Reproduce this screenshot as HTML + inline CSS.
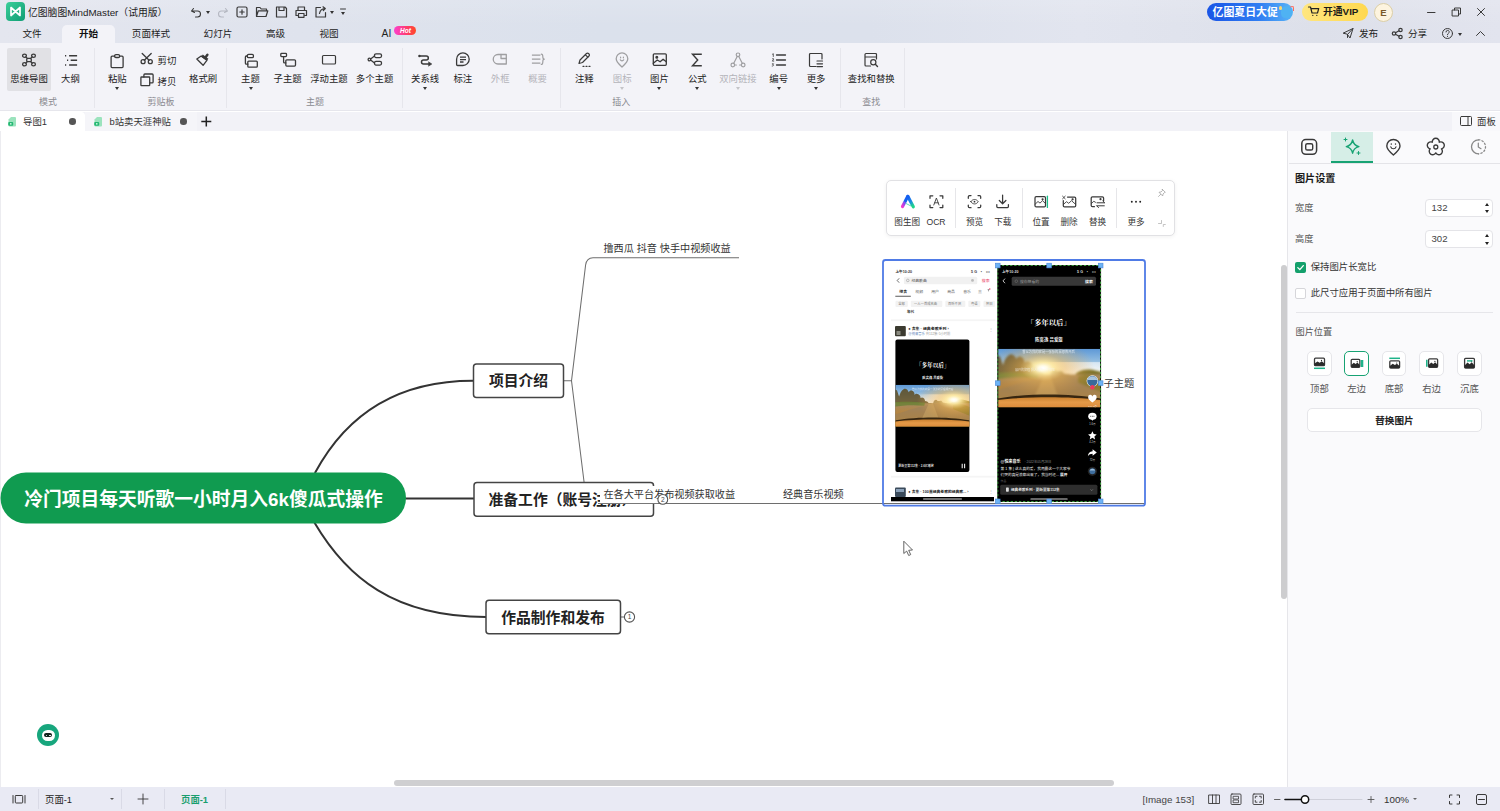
<!DOCTYPE html>
<html lang="zh-CN">
<head>
<meta charset="utf-8">
<title>亿图脑图MindMaster</title>
<style>
*{box-sizing:border-box;margin:0;padding:0}
html,body{width:1500px;height:811px;overflow:hidden;background:#fff}
body{font-family:"Liberation Sans","Noto Sans CJK SC",sans-serif;font-size:9.4px;color:#222;position:relative}
.abs{position:absolute}
svg{position:absolute;overflow:visible}
.ic{fill:none;stroke:#3a3a3a;stroke-width:1.2;stroke-linecap:round;stroke-linejoin:round}
.dis{opacity:.45}
/* header */
#hdr{position:absolute;left:0;top:0;width:1500px;height:43px;background:linear-gradient(180deg,rgba(255,255,255,.12),rgba(255,255,255,0) 60%),linear-gradient(90deg,#e4e6ef 0%,#dfe3ed 20%,#dbe1ec 40%,#dce1ec 58%,#e2e5ef 72%,#dde0ea 88%,#e2e4ee 100%)}
#title{position:absolute;left:28px;top:5px;font-size:9.8px;line-height:16px;color:#1d1d1d;white-space:nowrap}
.menu{position:absolute;top:25px;height:18px;line-height:18px;font-size:9.6px;color:#222;white-space:nowrap;transform:translateX(-50%)}
#acttab{position:absolute;left:62px;top:25px;width:53px;height:19px;background:#f3f3f8;border-radius:5px 5px 0 0}
/* ribbon */
#rib{position:absolute;left:0;top:43px;width:1500px;height:68px;background:#f3f3f8;border-bottom:1px solid #e6e6ec}
.rl{position:absolute;top:72.6px;height:12px;line-height:12px;font-size:9.4px;color:#222;white-space:nowrap;transform:translateX(-50%)}
.gl{position:absolute;top:95.5px;height:12px;line-height:12px;font-size:9px;color:#8a8a90;white-space:nowrap;transform:translateX(-50%)}
.sep{position:absolute;top:48px;width:1px;height:60px;background:#e6e6ec}
.arr{position:absolute;width:0;height:0;border-left:2.5px solid transparent;border-right:2.5px solid transparent;border-top:3px solid #333;transform:translateX(-50%)}
/* tab bar */
#tabs{position:absolute;left:0;top:112px;width:1500px;height:18.5px;background:#f2f2f7}
/* canvas */
#cv{position:absolute;left:0;top:130.5px;width:1287px;height:656.5px;background:#fff;border-left:1.5px solid #ececf0}
/* right panel */
#rp{position:absolute;left:1287px;top:130.5px;width:213px;height:656.5px;background:#fafafc;border-left:1px solid #e6e6ea}
.pl{position:absolute;font-size:9.4px;line-height:12px;color:#333;white-space:nowrap}
.nd{line-height:33px;text-align:center;font-weight:bold;font-size:14.8px;color:#222;white-space:nowrap}
.st{font-size:10.15px;line-height:14px;color:#333;white-space:nowrap}
.tl{position:absolute;top:216px;line-height:12px;font-size:8.6px;color:#333;white-space:nowrap;transform:translateX(-50%)}
.inp{position:absolute;left:1425px;width:68px;height:18px;background:#fff;border:1px solid #e4e4e8;border-radius:4px;line-height:16.5px;font-size:9.6px;color:#444;padding-left:5.5px}
.sp{border-left-width:2.5px;border-right-width:2.5px;border-top-width:3px;border-top-color:#222}
.pb{position:absolute;top:351.2px;width:24.6px;height:24.6px;background:#fff;border:1px solid #e6e6ea;border-radius:5px}
.ctr{transform:translateX(-50%)}
/* status */
#st{position:absolute;left:0;top:787px;width:1500px;height:24px;background:#e9eaf4}
.stt{position:absolute;top:793.5px;line-height:12px;font-size:9.4px;color:#333;white-space:nowrap}
</style>
</head>
<body>
<div id="hdr"></div>
<div id="acttab"></div>
<div id="title">亿图脑图MindMaster（试用版）</div>
<div id="rib"></div>
<div id="tabs"></div>
<div id="cv"></div>
<div id="rp"></div>
<div id="st"></div>
<!--HEADER-->
<!-- logo -->
<svg style="left:6px;top:2px" width="19" height="19" viewBox="0 0 19 19"><defs><linearGradient id="lg1" x1="0" y1="0" x2="1" y2="1"><stop offset="0" stop-color="#3ccf9a"/><stop offset="1" stop-color="#0f9d74"/></linearGradient></defs><rect width="19" height="19" rx="4" fill="url(#lg1)"/><path d="M5 13.5V5.5L9.5 9.5L14 5.5V13.5L9.5 9.5Z" fill="none" stroke="#fff" stroke-width="1.7" stroke-linejoin="round"/></svg>
<!-- quick access -->
<svg style="left:189px;top:5px" width="160" height="15" viewBox="189 5 160 15" class="ic" stroke="#444" stroke-width="1.050">
<path d="M193.5 8.5 L191.5 11 L194.5 12.5 M191.8 11 H197.5 A3 3 0 0 1 197.5 17 H195.5" stroke-width="1.1"/>
<path d="M225.5 8.5 L227.5 11 L224.5 12.5 M227.2 11 H221.5 A3 3 0 0 0 221.5 17 H223.5" stroke="#b5b8c2" stroke-width="1.1"/>
<rect x="237" y="7" width="10" height="10" rx="1.5"/><path d="M242 9.8v4.4M239.8 12h4.4"/>
<path d="M256.5 16.5v-9h3.5l1.2 1.5h5.3v1.8M256.5 16.5l1.8-5.7h9.5l-1.8 5.7z"/>
<path d="M276.500 7h8.5l1.500 1.500v8.500h-10zM279 7v3.500h5v-3.500M279 17"/>
<path d="M298 10.500v-3.500h6.500v3.500M297.500 15.500h-1.500v-5h10.500v5h-1.500M298.500 13.500h5.500v3.800h-5.500z"/>
<path d="M320.500 7.500h-4.500v9.500h9.500v-4.500M319.500 13.500c0.500-3 2.500-4.800 5.500-5M323 6.800l2.300 1.700-2 2"/>
<path d="M340.500 9h5" stroke-width="1"/>
</svg>
<div class="arr" style="left:207.500px;top:11px;border-top-color:#333"></div>
<div class="arr" style="left:332px;top:11px"></div>
<div class="arr" style="left:343px;top:12px"></div>
<!-- menu -->
<div class="menu" style="left:32px">文件</div>
<div class="menu" style="left:88.500px;font-weight:bold;color:#111">开始</div>
<div class="menu" style="left:151px">页面样式</div>
<div class="menu" style="left:218px">幻灯片</div>
<div class="menu" style="left:275.500px">高级</div>
<div class="menu" style="left:329px">视图</div>
<div class="menu" style="left:386.400px;font-size:10.300px">AI</div>
<div class="abs" style="left:394.300px;top:25.800px;width:22.200px;height:9.600px;border-radius:5px;background:linear-gradient(90deg,#fb40cf,#ff3d6a 60%,#ff4a22);color:#fff;font-size:6.500px;line-height:9px;text-align:center;font-weight:bold;font-style:italic">Hot</div>
<!-- promo -->
<div class="abs" style="left:1207px;top:3px;width:86px;height:17.500px;border-radius:9px;background:linear-gradient(90deg,#1a55e6,#2f7df2 60%,#59b4f7);color:#fff;font-weight:bold;font-size:10.900px;line-height:18.500px;padding-left:5.500px;white-space:nowrap">亿图夏日大促</div>
<div class="abs" style="left:1281px;top:6px;width:11px;height:12px;border-radius:6px 6px 5px 5px;background:#4fb2f3"></div>
<div class="abs" style="left:1278.500px;top:6px;width:3.500px;height:3.500px;border-radius:2px;background:#f7d774"></div>
<div class="abs" style="left:1289.500px;top:6px;width:4px;height:5px;border-radius:3px 3px 0 3px;border:1px solid #ff6a5c;border-bottom:none;border-left:none"></div>
<div class="abs" style="left:1302px;top:3px;width:66px;height:18px;border-radius:9px;background:linear-gradient(90deg,#ffe680,#ffd84f);color:#1a1a1a;font-weight:bold;font-size:9.800px;line-height:18px;padding-left:21px;white-space:nowrap">开通VIP</div>
<svg style="left:1308px;top:6px" width="12" height="11" viewBox="0 0 12 11" class="ic"><path d="M0.500 1h2l1.500 6h5.500l1.200-4.300h-7.600M4.800 9.300v.2M8.800 9.300v.2" stroke-width="1.200" stroke="#222"/></svg>
<div class="abs" style="left:1374px;top:2.500px;width:19px;height:19px;border-radius:10px;background:#fdf4df;border:1px solid #dccfa6;color:#7a5a2a;font-weight:bold;font-size:9.500px;line-height:17px;text-align:center">E</div>
<svg style="left:1420px;top:4px" width="75" height="16" viewBox="1420 4 75 16" class="ic"><path d="M1427.500 12.500h7.500" stroke-width="1"/><path d="M1452.500 10h6v6h-6zM1454.500 10v-2h6v6h-2" stroke-width="1"/><path d="M1477.500 8.500l7 7M1484.500 8.500l-7 7" stroke-width="1"/></svg>
<!-- row2 right -->
<svg style="left:1340px;top:26px" width="155" height="16" viewBox="1340 26 155 16" class="ic">
<path d="M1343.500 33l9.500-4.500-3 9.500-2.500-3.500zM1347.500 34.500l5.500-6M1347.500 34.500v3" stroke-width="1"/>
<circle cx="1394" cy="33.500" r="1.700"/><circle cx="1400.500" cy="30" r="1.700"/><circle cx="1400.500" cy="37" r="1.700"/><path d="M1395.500 32.700l3.500-1.900M1395.500 34.300l3.500 1.900"/>
<circle cx="1447.500" cy="33.500" r="5" stroke-width="1"/><path d="M1446 32a1.600 1.600 0 1 1 2.300 1.400c-.6.300-.8.700-.8 1.300M1447.500 36.300v.2" stroke-width="1"/>
<path d="M1476.500 35.500l4-4 4 4" stroke-width="1"/>
</svg>
<div class="arr" style="left:1460px;top:32.500px"></div>
<div class="menu" style="left:1368.500px">发布</div>
<div class="menu" style="left:1417.500px">分享</div>
<!--/HEADER-->
<!--RIBBON-->
<div class="abs" style="left:6.5px;top:48px;width:44.5px;height:43px;background:#e1e1e5;border-radius:2px"></div>
<div class="sep" style="left:93.8px"></div>
<div class="sep" style="left:226.2px"></div>
<div class="sep" style="left:401.8px"></div>
<div class="sep" style="left:559.8px"></div>
<div class="sep" style="left:840.1px"></div>
<div class="sep" style="left:903.7px"></div>
<svg class="ic" style="left:20.3px;top:51.3px" width="18" height="18" viewBox="0 0 18 18"><rect x="6.700" y="7.300" width="4.600" height="3.400" rx="1.200" stroke-width="1.300"/><ellipse cx="4.500" cy="4.700" rx="1.900" ry="1.600" stroke-width="1.300"/><ellipse cx="13.500" cy="4.700" rx="1.900" ry="1.600" stroke-width="1.300"/><ellipse cx="4.500" cy="13.300" rx="1.900" ry="1.600" stroke-width="1.300"/><ellipse cx="13.500" cy="13.300" rx="1.900" ry="1.600" stroke-width="1.300"/><path d="M5.800 5.900l1.700 1.500M12.200 5.900l-1.700 1.500M5.800 12.100l1.700-1.500M12.200 12.100l-1.700-1.500" stroke-width="1.300"/></svg>
<div class="rl" style="left:29.1px">思维导图</div>
<svg class="ic" style="left:61.5px;top:51.0px" width="18" height="18" viewBox="0 0 18 18"><path d="M3 4.800h1.200M7.100 4.800h8M5 9.300h1.200M8.700 9.300h6.400M3 14h1.200M7.100 14h8" stroke-width="1.400" stroke-linecap="butt"/></svg>
<div class="rl" style="left:70.5px">大纲</div>
<div class="gl" style="left:48px">模式</div>
<svg class="ic" style="left:108.3px;top:51.6px" width="18" height="18" viewBox="0 0 18 18"><path d="M6.600 4.200h-2.500a1 1 0 0 0-1 1v9.400a1 1 0 0 0 1 1h10a1 1 0 0 0 1-1v-9.400a1 1 0 0 0-1-1h-2.500" stroke-width="1.300"/><rect x="6.600" y="2.600" width="5" height="2.900" rx="1.300" stroke-width="1.300"/></svg>
<div class="rl" style="left:117.3px">粘贴</div>
<div class="arr" style="left:117.3px;top:87px"></div>
<svg class="ic" style="left:138.0px;top:49.8px" width="18" height="18" viewBox="0 0 18 18"><circle cx="5.100" cy="11.700" r="2" stroke-width="1.300"/><circle cx="12.300" cy="11.700" r="2" stroke-width="1.300"/><path d="M6.300 10.200l6.900-6.700M11.100 10.200l-6.900-6.700" stroke-width="1.300"/></svg>
<div class="rl" style="left:167px;top:54.600px">剪切</div>
<svg class="ic" style="left:138.0px;top:71.0px" width="18" height="18" viewBox="0 0 18 18"><rect x="2.900" y="6" width="8.800" height="8.600" rx="0.600" stroke-width="1.300"/><path d="M5.900 6v-2a1 1 0 0 1 1-1h7.200a1 1 0 0 1 1 1v6.900a1 1 0 0 1-1 1h-2.400" stroke-width="1.300"/></svg>
<div class="rl" style="left:167px;top:75.600px">拷贝</div>
<svg class="ic" style="left:194.2px;top:51.0px" width="18" height="18" viewBox="0 0 18 18"><path d="M13.400 3.800l-1.600 2.200" stroke-width="2.400"/><path d="M8 4.600l5.600 4.200" stroke-width="2.600" stroke-linecap="butt"/><path d="M7.200 5l-4.400 3 6.300 6.300 3.800-5z" stroke-width="1.300"/></svg>
<div class="rl" style="left:203.2px">格式刷</div>
<div class="gl" style="left:161px">剪贴板</div>
<svg class="ic" style="left:241.5px;top:51.5px" width="18" height="18" viewBox="0 0 18 18"><rect x="5.400" y="2.400" width="6" height="3.300" rx="1.200" stroke-width="1.300"/><rect x="5.800" y="9.100" width="9.500" height="6.100" rx="1" stroke-width="1.300"/><path d="M5.400 4h-1a1 1 0 0 0-1 1v6.200a1 1 0 0 0 1 1h1.400" stroke-width="1.300"/></svg>
<div class="rl" style="left:250.5px">主题</div>
<div class="arr" style="left:250.5px;top:87px"></div>
<svg class="ic" style="left:278.6px;top:51.5px" width="18" height="18" viewBox="0 0 18 18"><rect x="1.800" y="1.400" width="5.700" height="3.200" rx="0.800" stroke-width="1.300"/><rect x="6.800" y="7.800" width="9.700" height="6.300" rx="1" stroke-width="1.300"/><path d="M4.600 4.600v5.300a1 1 0 0 0 1 1h1.200" stroke-width="1.300"/></svg>
<div class="rl" style="left:287.6px">子主题</div>
<svg class="ic" style="left:320.0px;top:51.0px" width="18" height="18" viewBox="0 0 18 18"><rect x="2.500" y="4.500" width="13" height="8.500" rx="1"/></svg>
<div class="rl" style="left:329px">浮动主题</div>
<svg class="ic" style="left:365.6px;top:51.0px" width="18" height="18" viewBox="0 0 18 18"><circle cx="3.400" cy="8.500" r="1.300" stroke-width="1.300"/><rect x="8.500" y="2.800" width="7" height="3.800" rx="1.500" stroke-width="1.300"/><rect x="8.500" y="10.300" width="7" height="3.800" rx="1.500" stroke-width="1.300"/><path d="M4.600 8l3.900-3M4.600 9l3.900 3" stroke-width="1.300"/></svg>
<div class="rl" style="left:374.6px">多个主题</div>
<div class="gl" style="left:315px">主题</div>
<svg class="ic" style="left:416.2px;top:51.5px" width="18" height="18" viewBox="0 0 18 18"><circle cx="3.400" cy="4" r="1.200" fill="#3a3a3a" stroke="none"/><path d="M4 4h6.300a2 2 0 0 1 0 4h-2.800a2 2 0 0 0 0 4h5.500" stroke-width="1.500"/><path d="M12.800 10l3 2-3 2z" fill="#3a3a3a" stroke-width="0.600"/></svg>
<div class="rl" style="left:425.2px">关系线</div>
<div class="arr" style="left:425.2px;top:87px"></div>
<svg class="ic" style="left:453.8px;top:51.0px" width="18" height="18" viewBox="0 0 18 18"><path d="M2.600 8.200a6.300 6.300 0 1 1 6.300 6.300h-5.300a1 1 0 0 1-1-1z" stroke-width="1.300"/><path d="M6 6.200h6M6 8.600h6M6 11h3.500" stroke-width="1.300" stroke-linecap="butt"/></svg>
<div class="rl" style="left:462.8px">标注</div>
<svg class="ic dis" style="left:491.2px;top:51.0px" width="18" height="18" viewBox="0 0 18 18"><path d="M15.300 3.500h-8.300a4.750 4.750 0 0 0 0 9.500h8.300z" stroke-width="1.300"/><path d="M10 3.500v4h5.300" stroke-width="1.300"/></svg>
<div class="rl" style="left:500.2px;color:#b4b4ba">外框</div>
<svg class="ic dis" style="left:528.6px;top:51.0px" width="18" height="18" viewBox="0 0 18 18"><path d="M2.900 4.200h8.500M2.900 8.200h8.500M2.900 12.200h8.500" stroke-width="1.300" stroke-linecap="butt"/><path d="M12.300 3.200c1.500 0 1.500 1 1.500 2.300s0 2.700 1.500 2.700c-1.500 0-1.500 1.400-1.500 2.700s0 2.500-1.500 2.500" stroke-width="1.200"/></svg>
<div class="rl" style="left:537.6px;color:#b4b4ba">概要</div>
<svg class="ic" style="left:575.3px;top:50.6px" width="18" height="18" viewBox="0 0 18 18"><path d="M4 12.500l1-3.500 6.500-6.500a1.400 1.400 0 0 1 2 0l.5.500a1.400 1.400 0 0 1 0 2l-6.500 6.500zM10.500 3.800l2.500 2.500"/><path d="M8 15.300h1M11 15.300h1M14 15.300h1" stroke-width="1.300"/></svg>
<div class="rl" style="left:584.3px">注释</div>
<svg class="ic dis" style="left:613.2px;top:50.6px" width="18" height="18" viewBox="0 0 18 18"><path d="M9 16c-3-2.800-5.800-5.200-5.800-8.300a5.800 5.800 0 0 1 11.600 0c0 3.100-2.800 5.500-5.800 8.300z" stroke-width="1.300"/><path d="M7.300 8.800a1.900 1.900 0 0 0 3.400 0M7.600 6.200v.6M10.400 6.200v.6" stroke-width="1.200"/></svg>
<div class="rl" style="left:622.2px;color:#b4b4ba">图标</div>
<div class="arr" style="left:622.2px;top:87px;border-top-color:#c4c4c8"></div>
<svg class="ic" style="left:650.4px;top:50.6px" width="18" height="18" viewBox="0 0 18 18"><rect x="3.300" y="2.800" width="13" height="11.500" rx="1" stroke-width="1.300"/><circle cx="6.800" cy="6.200" r="0.900" fill="#3a3a3a"/><path d="M3.300 12.300l4-3.300 2.800 1.800 3-2.600 3.200 2.600" stroke-width="1.300"/></svg>
<div class="rl" style="left:659.4px">图片</div>
<div class="arr" style="left:659.4px;top:87px"></div>
<svg class="ic" style="left:688.3px;top:50.6px" width="18" height="18" viewBox="0 0 18 18"><path d="M13.800 3.300h-9.300l5.200 5.700-5.200 5.700h9.300" stroke-width="1.400" stroke-linecap="butt" stroke-linejoin="miter"/></svg>
<div class="rl" style="left:697.3px">公式</div>
<div class="arr" style="left:697.3px;top:87px"></div>
<svg class="ic dis" style="left:728.9px;top:50.6px" width="18" height="18" viewBox="0 0 18 18"><circle cx="9" cy="3.800" r="1.800"/><circle cx="3.800" cy="14" r="1.800"/><circle cx="14.200" cy="14" r="1.800"/><path d="M8.200 5.400l-3.600 7M9.800 5.400l3.600 7M5.600 14h1.800M10.600 14h1.800"/></svg>
<div class="rl" style="left:737.9px;color:#b4b4ba">双向链接</div>
<div class="arr" style="left:737.9px;top:87px;border-top-color:#c4c4c8"></div>
<svg class="ic" style="left:769.7px;top:50.6px" width="18" height="18" viewBox="0 0 18 18"><path d="M6.500 4h9M6.500 9h9M6.500 14h9" stroke-width="1.300"/><path d="M2.500 3.200l.8-.5v2.800M2.300 7.800c.4-.5 1.400-.4 1.400.3s-1.300 1.200-1.400 2h1.500M2.300 12.800h1.300l-.8 1c1 0 1 1.400-.6 1.300" stroke-width="0.800"/></svg>
<div class="rl" style="left:778.7px">编号</div>
<div class="arr" style="left:778.7px;top:87px"></div>
<svg class="ic" style="left:807.1px;top:50.6px" width="18" height="18" viewBox="0 0 18 18"><path d="M15 8v-4.500a1 1 0 0 0-1-1h-10.500a1 1 0 0 0-1 1v11a1 1 0 0 0 1 1h5.500"/><path d="M10 10h5.500M10 12.800h5.500M10 15.600h5.500" stroke-width="1.200"/></svg>
<div class="rl" style="left:816.1px">更多</div>
<div class="arr" style="left:816.1px;top:87px"></div>
<div class="gl" style="left:621.2px">插入</div>
<svg class="ic" style="left:862.3px;top:51.0px" width="18" height="18" viewBox="0 0 18 18"><path d="M14.500 8v-4.500a1 1 0 0 0-1-1h-9.500a1 1 0 0 0-1 1v10.500a1 1 0 0 0 1 1h4.500M3 6h11.500"/><circle cx="11.300" cy="11.300" r="2.600"/><path d="M13.300 13.300l2.200 2.200" stroke-width="1.400"/></svg>
<div class="rl" style="left:871.3px">查找和替换</div>
<div class="gl" style="left:871.3px">查找</div>
<!--/RIBBON-->
<!--TABS-->
<div class="abs" style="left:0;top:112px;width:85px;height:18.500px;background:#fff;border-radius:0 4px 0 0"></div>
<div class="abs" style="left:85px;top:112px;width:112px;height:18.500px;background:#f5f5f9"></div>
<svg style="left:7px;top:116px" width="10" height="11" viewBox="0 0 10 11"><path d="M1.500 3.500l2.500-2.500h4a1 1 0 0 1 1 1v7.500a1 1 0 0 1-1 1h-5.500a1 1 0 0 1-1-1z" fill="#9be3bd"/><rect x="1.200" y="6" width="5" height="3.800" rx="1" fill="#25b873"/><rect x="3" y="7.200" width="1.500" height="1.300" fill="#e8fff3"/></svg>
<div class="pl" style="left:23px;top:115.500px;color:#333">导图1</div>
<div class="abs" style="left:69.300px;top:118.300px;width:6.400px;height:6.400px;border-radius:50%;background:#555"></div>
<svg style="left:92.500px;top:116px" width="10" height="11" viewBox="0 0 10 11"><path d="M1.500 3.500l2.500-2.500h4a1 1 0 0 1 1 1v7.500a1 1 0 0 1-1 1h-5.500a1 1 0 0 1-1-1z" fill="#9be3bd"/><rect x="1.200" y="6" width="5" height="3.800" rx="1" fill="#25b873"/><rect x="3" y="7.200" width="1.500" height="1.300" fill="#e8fff3"/></svg>
<div class="pl" style="left:109.500px;top:115.500px;color:#333">b站卖天涯神贴</div>
<div class="abs" style="left:180.400px;top:118.300px;width:6.400px;height:6.400px;border-radius:50%;background:#555"></div>
<svg class="ic" style="left:200px;top:115px" width="13" height="13" viewBox="0 0 13 13"><path d="M6.300 1.500v10M1.300 6.500h10" stroke="#222" stroke-width="1.500" stroke-linecap="butt"/></svg>
<div class="abs" style="left:1452px;top:112px;width:48px;height:18.500px;background:#f8f8fb"></div>
<svg class="ic" style="left:1460px;top:116px" width="12" height="10" viewBox="0 0 12 10"><rect x="0.500" y="0.500" width="11" height="9" rx="1" stroke-width="1"/><path d="M8 0.500v9" stroke-width="1"/></svg>
<div class="pl" style="left:1477px;top:115.500px">面板</div>
<!--/TABS-->
<!--CANVAS-->
<svg style="left:0;top:131px" width="1288" height="656" viewBox="0 131 1288 656">
<defs>
<linearGradient id="sky" x1="0" y1="0" x2="0" y2="1"><stop offset="0" stop-color="#5d98d6"/><stop offset="0.2" stop-color="#8fbbe0"/><stop offset="0.36" stop-color="#d9e6ea"/><stop offset="0.46" stop-color="#f6ecd0"/><stop offset="0.55" stop-color="#d8b47c"/></linearGradient>
<radialGradient id="sun" cx="0.44" cy="0.33" r="0.5"><stop offset="0" stop-color="#ffffff"/><stop offset="0.08" stop-color="#fffbe6"/><stop offset="0.2" stop-color="#ffeaa0" stop-opacity=".9"/><stop offset="0.45" stop-color="#f4b650" stop-opacity=".5"/><stop offset="1" stop-color="#e8a040" stop-opacity="0"/></radialGradient>
<radialGradient id="sunL" cx="0.79" cy="0.36" r="0.5"><stop offset="0" stop-color="#ffffff"/><stop offset="0.08" stop-color="#fffbe6"/><stop offset="0.2" stop-color="#ffeaa0" stop-opacity=".9"/><stop offset="0.45" stop-color="#f4b650" stop-opacity=".5"/><stop offset="1" stop-color="#e8a040" stop-opacity="0"/></radialGradient>
<linearGradient id="road" x1="0" y1="0" x2="0" y2="1"><stop offset="0" stop-color="#a58a62"/><stop offset="0.4" stop-color="#b58540"/><stop offset="1" stop-color="#c78a25"/></linearGradient>
<linearGradient id="hood" x1="0" y1="0" x2="0" y2="1"><stop offset="0" stop-color="#c9802f"/><stop offset="0.5" stop-color="#e49a48"/><stop offset="1" stop-color="#dc8c3c"/></linearGradient>
<linearGradient id="wht" x1="0" y1="0" x2="1" y2="0"><stop offset="0.3" stop-color="#fff" stop-opacity="0"/><stop offset="0.55" stop-color="#fff" stop-opacity=".75"/><stop offset="1" stop-color="#fff" stop-opacity=".55"/></linearGradient>
<symbol id="sunset" viewBox="0 0 100 57" preserveAspectRatio="none">
<filter id="bl" x="-10%" y="-10%" width="120%" height="120%"><feGaussianBlur stdDeviation="0.8"/></filter>
<rect width="100" height="57" fill="url(#sky)"/>
<rect x="0" y="13" width="100" height="13" fill="url(#wht)"/>
<g filter="url(#bl)">
<path d="M-2 9c1-3 4-3 5 1l2 6c1-4 3-8 6-10 3-2 6 1 7 4 1-2 3-3 5-2 2 1 3 3 3 6 1-2 3-2 5-1s3 3 3 5c1-1 3-1 4 0s2 2 2 4c2 0 4 1 5 3l3 0c2 0 3 1 4 2l8 1v4h-62z" fill="#5c4a1e" opacity=".85"/>
<path d="M52 22c2-2 4-2 5 0l3 0c2-1 3 0 4 2l6 1v3h-20z" fill="#6a5522" opacity=".7"/>
<path d="M76 24c4-3.500 10-4.500 16-3.500l10 2.500v12h-30z" fill="#7d7226"/>
<path d="M-2 25h104v34h-104z" fill="url(#road)"/>
<path d="M-2 24c10-1.500 27-1 42 .5l-1 4c-14-1.500-31-.5-41 1.500z" fill="#6f8238" opacity=".9"/>
<path d="M62 25c5 0 10 1.500 16 4.500l24 11v9h-104v-9c20-6 42-14 64-15.500z" fill="#98805e" opacity=".55"/>
<path d="M45 26l6 0 8 22h-24z" fill="#ffd98a" opacity=".22"/>
<path d="M78 27c4-2 10-2 14 0l10 4v12l-24-10z" fill="#8a7a2a" opacity=".85"/>
</g>
</symbol>
<symbol id="hoodS" viewBox="0 0 100 57" preserveAspectRatio="none">
<path d="M0 48.500c15-3 35-4 50-4s35 1 50 4v2.500h-100z" fill="#2a1c0a" opacity=".9"/>
<path d="M0 50c15-2 35-2.800 50-2.800s35 .8 50 2.800v7h-100z" fill="url(#hood)"/>
</symbol>
</defs>
<!-- main branches -->
<g fill="none" stroke="#333" stroke-width="2" stroke-linecap="round">
<path d="M315.200 472.500C353.200 402.100 412.400 380.700 473 380.700"/>
<path d="M406 498.500H474"/>
<path d="M314.700 523C346.500 576.800 393.500 617 486 617"/>
</g>
<!-- thin branches -->
<g fill="none" stroke="#6e6e6e" stroke-width="1.050">
<path d="M564 380.800h7.500L585.600 265c.8-5 3-7.200 7.400-7.200H739"/>
<path d="M571.500 380.800L584.200 483c1.500 12 3 20.500 14 20.500H1145"/>
<path d="M621 617h4"/>
</g>
<!-- central -->
<rect x="0.500" y="472.500" width="405.500" height="51" rx="25.500" fill="#109b50"/>
<!-- nodes -->
<g fill="#fff" stroke="#444" stroke-width="1.500">
<rect x="473.500" y="364" width="90" height="33.500" rx="3"/>
<rect x="474" y="482.500" width="179.500" height="33.700" rx="3"/>
<rect x="486" y="600.200" width="134.500" height="33.500" rx="3"/>
</g>
</svg>
<div class="abs" style="left:0;top:472.500px;width:406px;height:51px;line-height:53px;text-align:center;color:#fff;font-weight:bold;font-size:18.750px;white-space:nowrap;padding-left:1px">冷门项目每天听歌一小时月入6k傻瓜式操作</div>
<div class="abs nd" style="left:473px;top:364.600px;width:91px;height:33.500px">项目介绍</div>
<div class="abs nd" style="left:488.500px;top:484px;width:170px;height:33px;text-align:left">准备工作（账号注册）</div>
<div class="abs nd" style="left:485.500px;top:601.500px;width:135px;height:33.500px">作品制作和发布</div>
<svg style="left:623px;top:611px" width="14" height="14" viewBox="623 611 14 14"><circle cx="629.500" cy="617" r="5.100" fill="#fff" stroke="#555" stroke-width="1.100"/><text x="629.500" y="619.200" text-anchor="middle" font-size="6.600" fill="#444">1</text></svg>
<div class="abs st" style="left:603.500px;top:241.900px">撸西瓜 抖音 快手中视频收益</div>
<div class="abs" style="left:600px;top:486px;width:148px;height:17px;background:#fff"></div>
<div class="abs" style="left:598px;top:503px;width:60px;height:1px;background:#777"></div>
<div class="abs st" style="left:603.500px;top:487.900px">在各大平台发布视频获取收益</div>
<svg style="left:656px;top:493px" width="14" height="14" viewBox="656 493 14 14"><circle cx="662.800" cy="499.400" r="4.900" fill="#fff" stroke="#555" stroke-width="1.100"/><text x="662.800" y="501.600" text-anchor="middle" font-size="6.600" fill="#444">2</text></svg>
<div class="abs st" style="left:783px;top:487.900px">经典音乐视频</div>
<div class="abs st" style="left:1103.500px;top:377px;font-size:10.300px">子主题</div>
<svg style="left:880px;top:255px" width="270" height="255" viewBox="880 255 270 255" font-family="Liberation Sans, Noto Sans CJK SC, sans-serif">
<rect x="883" y="260" width="262" height="245.700" rx="2.500" fill="none" stroke="#4f7be6" stroke-width="1.800"/>
<!-- left phone -->
<rect x="891" y="265.500" width="104.300" height="236" fill="#fff"/>
<g fill="#333" font-size="3.600">
<text x="895.500" y="272.700" font-weight="bold">上午10:20</text>
<text x="971" y="272.700" font-weight="bold" textLength="18.500">5G ▪ ▭</text>
<path d="M899.200 278.300l-2 2.200 2 2.200" fill="none" stroke="#333" stroke-width="0.700"/>
<rect x="903.900" y="276.700" width="73.300" height="7.500" rx="1.500" fill="#f1f1f1"/>
<circle cx="907.800" cy="280.400" r="1.300" fill="none" stroke="#777" stroke-width="0.400"/>
<text x="911.500" y="281.800" fill="#444" font-size="3.800">经典歌曲</text>
<circle cx="972.500" cy="280.400" r="1.400" fill="#bbb"/>
<text x="981.800" y="281.800" fill="#e8335a" font-size="3.900">搜索</text>
<text x="899.300" y="292.700" font-weight="bold" fill="#222" font-size="3.900">综合</text>
<g fill="#666" font-size="3.900"><text x="915.300" y="292.700">视频</text><text x="931.200" y="292.700">用户</text><text x="947.200" y="292.700">商品</text><text x="963.200" y="292.700">音乐</text><text x="978" y="292.700" fill="#aaa">直</text></g>
<path d="M987.500 289l2 0-1 3z" fill="#999"/><circle cx="989.800" cy="289" r="0.700" fill="#e8335a"/>
<rect x="895.300" y="295.800" width="15.500" height="0.800" fill="#333"/>
<g fill="#f2f2f2"><rect x="895.500" y="300.800" width="12.300" height="6.200" rx="1"/><rect x="910.800" y="300.800" width="31.500" height="6.200" rx="1"/><rect x="945.300" y="300.800" width="20" height="6.200" rx="1"/><rect x="968.300" y="300.800" width="12" height="6.200" rx="1"/><rect x="983.500" y="300.800" width="11.500" height="6.200" rx="1"/></g>
<g fill="#777" font-size="3.300"><text x="898.300" y="305.200">全部</text><text x="914" y="305.200">一人一首成名曲</text><text x="948" y="305.200">百听不厌</text><text x="971" y="305.200">粤语</text><text x="986" y="305.200">怀旧</text></g>
<text x="907" y="313.300" font-weight="bold" fill="#333" font-size="3.600">年代</text>
<rect x="891" y="319.300" width="104.300" height="1.800" fill="#f5f5f5"/>
<rect x="895" y="326" width="10.800" height="10.300" rx="1" fill="#3b3a30"/><rect x="896.500" y="331" width="4" height="4" fill="#8a8a80"/>
<text x="908.300" y="330.300" font-weight="bold" fill="#222" font-size="3.900">● 合集 · 经典老歌系列 ›</text>
<text x="908.300" y="335.300" fill="#5a7fb8" font-size="3.300">@悦来音乐 <tspan fill="#999">共112集·5小时前</tspan></text>
<text x="988.500" y="330.500" fill="#bbb" font-size="4">⋮</text>
</g>
<rect x="895.400" y="339.500" width="74" height="132.600" rx="2" fill="#000"/>
<text x="932.700" y="367.300" text-anchor="middle" fill="#fff" font-size="5.600" font-weight="bold" font-family="Liberation Serif, Noto Serif CJK SC, serif">「多年以后」</text>
<text x="932.700" y="379" text-anchor="middle" fill="#eee" font-size="3.300" font-weight="bold">陈奕逸  吕爱旋</text>
<use href="#sunset" x="895.400" y="384.800" width="74" height="41.800"/>
<rect x="895.400" y="384.800" width="74" height="41.800" fill="url(#sunL)"/><use href="#hoodS" x="895.400" y="384.800" width="74" height="41.800"/>
<text x="932.700" y="389.500" text-anchor="middle" fill="#eaf2fa" font-size="2.600" opacity=".8">曾以为我的家是一张张的票根撕开后</text>
<text x="898.200" y="467" fill="#ddd" font-size="3" font-weight="bold">更新至第112集 · 2.6亿播放</text>
<path d="M962.200 463.700v4.600M964.600 463.700v4.600" stroke="#eee" stroke-width="1.100"/>
<rect x="891" y="475.800" width="104.300" height="1.800" fill="#f5f5f5"/>
<rect x="895" y="487.500" width="10.800" height="9.500" rx="1" fill="#3a4a5a"/><rect x="896" y="489" width="8" height="3" fill="#8aa0b8"/>
<text x="908.300" y="493" fill="#222" font-size="3.800" font-weight="bold">● 合集 · 100首经典老歌的经典歌... ›</text>
<text x="988.500" y="493" fill="#bbb" font-size="4">⋮</text>
<rect x="891" y="497" width="103" height="4.300" fill="#000"/>
<rect x="923" y="498.600" width="39" height="0.900" rx="0.400" fill="#ddd"/>
<!-- right phone -->
<rect x="997.800" y="265.500" width="102.800" height="236" fill="#000"/>
<g fill="#ddd" font-size="3.600">
<text x="1002" y="272.700" font-weight="bold">上午10:20</text>
<text x="1077" y="272.700" font-weight="bold" textLength="18.500">5G ▪ ▭</text>
<path d="M1005 278.600l-2 2.300 2 2.300" fill="none" stroke="#eee" stroke-width="0.800"/>
<rect x="1011.700" y="276.700" width="84.300" height="9" rx="1.500" fill="#383838"/>
<circle cx="1016.300" cy="281.200" r="1.300" fill="none" stroke="#888" stroke-width="0.400"/>
<text x="1020" y="282.600" fill="#999" font-size="3.800">搜你想看的</text>
<text x="1085" y="282.600" fill="#fff" font-size="3.900" font-weight="bold">搜索</text>
</g>
<text x="1048.700" y="325.400" text-anchor="middle" fill="#fff" font-size="7.400" font-weight="bold" font-family="Liberation Serif, Noto Serif CJK SC, serif">「多年以后」</text>
<text x="1048.900" y="341.100" text-anchor="middle" fill="#f2f2f2" font-size="4.400" font-weight="bold">陈奕逸  吕爱旋</text>
<use href="#sunset" x="997.800" y="348.800" width="102.800" height="58.400"/>
<rect x="997.800" y="348.800" width="102.800" height="58.400" fill="url(#sun)"/><use href="#hoodS" x="997.800" y="348.800" width="102.800" height="58.400"/>
<text x="1048.500" y="353.200" text-anchor="middle" fill="#eaf2fa" font-size="3.300" opacity=".85">曾以为我的家是一张张的票根撕开后</text>
<text x="1035" y="370.500" text-anchor="middle" fill="#f4f4f4" font-size="3" opacity=".7">展开的旅程 投入另外一个陌生</text>
<!-- right side icons -->
<circle cx="1092.400" cy="381" r="5.800" fill="#fff"/><circle cx="1092.400" cy="381" r="5.200" fill="#3a6a9a"/><path d="M1087.400 380a5.200 5.200 0 0 1 10 0z" fill="#a8c4dc"/>
<circle cx="1092.400" cy="387.300" r="2.200" fill="#ee3a5c"/>
<path d="M1092.400 402.500c-3-2.300-4.300-3.600-4.300-5.300a2.200 2.200 0 0 1 4.300-.8 2.200 2.200 0 0 1 4.300.8c0 1.700-1.300 3-4.300 5.300z" fill="#fff"/>
<text x="1092.400" y="407" text-anchor="middle" fill="#e8e8e8" font-size="2.500" opacity=".8">214.5万</text>
<ellipse cx="1092.400" cy="416.300" rx="4.200" ry="3.500" fill="#fff"/><path d="M1091 419l1.400 1.800 1.400-1.800z" fill="#fff"/><path d="M1090.300 416.300h4.200" stroke="#333" stroke-width="0.900" stroke-dasharray="0.900 0.700"/>
<text x="1092.400" y="425" text-anchor="middle" fill="#ccc" font-size="2.600">1.6万</text>
<path d="M1092.400 431.300l1.300 2.800 3 .3-2.300 2 .7 3-2.700-1.600-2.700 1.600.7-3-2.300-2 3-.3z" fill="#fff"/>
<text x="1092.400" y="443.200" text-anchor="middle" fill="#ccc" font-size="2.600">4.2万</text>
<path d="M1096.800 452.500l-4.200-3.300v2c-3 .2-4.500 2-4.700 5 1.200-1.800 2.600-2.500 4.700-2.500v2.100z" fill="#fff"/>
<text x="1092.400" y="460.600" text-anchor="middle" fill="#ccc" font-size="2.600">72万</text>
<circle cx="1092.400" cy="471.300" r="4.600" fill="#222"/><circle cx="1092.400" cy="471.300" r="3" fill="#3f6f9f"/><path d="M1089.600 470.600a3 3 0 0 1 5.600 0z" fill="#9fc0dc"/>
<text x="1000.600" y="463.200" fill="#fff" font-size="4" font-weight="bold">@悦来音乐 <tspan fill="#888" font-size="3.300" font-weight="normal" dx="3">· 2022年05月28日</tspan></text>
<text x="1000.600" y="470.300" fill="#eee" font-size="3.700">第 1 集 | 这么真的爱，我用最这一个大家爷</text>
<text x="1000.600" y="476" fill="#eee" font-size="3.700">们哭的真是浪都出来了，我当时还... <tspan font-weight="bold" fill="#fff"> 展开</tspan></text>
<text x="1000.600" y="482" fill="#666" font-size="2.800">作品</text>
<rect x="1000.200" y="484.700" width="97.200" height="10.100" rx="1.500" fill="#2e2e2e"/>
<rect x="1006" y="487.500" width="2.800" height="4.200" rx="0.600" fill="#ddd"/>
<text x="1011" y="491.200" fill="#e4e4e4" font-size="3.600" font-weight="bold">经典老歌系列 · 更新至第112集</text>
<path d="M1090.500 489.400l1.200 1.200 1.200-1.200" fill="none" stroke="#aaa" stroke-width="0.500"/>
<rect x="1030.400" y="498.400" width="37.300" height="1" rx="0.500" fill="#ccc"/>
<!-- selection -->
<rect x="997.800" y="265.500" width="102.800" height="236" fill="none" stroke="#000" stroke-width="0.900"/>
<rect x="997.800" y="265.500" width="102.800" height="236" fill="none" stroke="#3fae3f" stroke-width="0.900" stroke-dasharray="2.300 1.800"/>
<g fill="#6db3f5" stroke="#4a86d8" stroke-width="0.600">
<rect x="995.400" y="263.200" width="4.700" height="4.700"/><rect x="1046.800" y="263.200" width="4.700" height="4.700"/><rect x="1098.300" y="263.200" width="4.700" height="4.700"/>
<rect x="995.400" y="380.800" width="4.700" height="4.700"/><rect x="1098.300" y="380.800" width="4.700" height="4.700"/>
<rect x="995.400" y="499" width="4.700" height="4.700"/><rect x="1046.800" y="499" width="4.700" height="4.700"/><rect x="1098.300" y="499" width="4.700" height="4.700"/>
</g>
</svg>
<div class="abs" style="left:886px;top:180px;width:289px;height:56px;background:#fff;border:1px solid #e1e1e4;border-radius:5px;box-shadow:0 1px 4px rgba(0,0,0,.06)"></div>
<div class="abs" style="left:955px;top:188px;width:1px;height:40px;background:#e6e6e9"></div>
<div class="abs" style="left:1022px;top:188px;width:1px;height:40px;background:#e6e6e9"></div>
<div class="abs" style="left:1116px;top:188px;width:1px;height:40px;background:#e6e6e9"></div>
<svg style="left:886px;top:180px" width="289" height="56" viewBox="886 180 289 56" class="ic" stroke="#333">
<defs><linearGradient id="ag" x1="0.300" y1="0" x2="0.800" y2="1"><stop offset="0" stop-color="#1560f0"/><stop offset="0.500" stop-color="#1a8de0"/><stop offset="1" stop-color="#21d58a"/></linearGradient><linearGradient id="ag2" x1="0" y1="1" x2="1" y2="0"><stop offset="0" stop-color="#f03ad0"/><stop offset="1" stop-color="#8a4af0"/></linearGradient></defs>
<path d="M907.800 196.300L913.300 206.800" stroke="url(#ag)" stroke-width="3.200" fill="none"/>
<path d="M907.800 196.300L905 201.700" stroke="#1560f0" stroke-width="3.200" fill="none"/>
<path d="M904.200 203.200L902.500 206.500" stroke="url(#ag2)" stroke-width="3.200" fill="none"/>
<path d="M906 203.500l5 2.500" stroke="#35d9a0" stroke-width="1" opacity=".8"/>
<!-- OCR -->
<path d="M930 198.300v-2.500h2.800M940 195.800h2.800v2.500M942.800 205v2.500h-2.800M932.800 207.500h-2.800v-2.500" stroke-width="1.250"/>
<path d="M933.800 205l2.600-7 2.600 7M934.700 202.800h3.400" stroke-width="0.900"/>
<!-- preview -->
<path d="M968.300 198.300v-1.500a1.200 1.200 0 0 1 1.200-1.200h1.500M978 195.600h1.500a1.200 1.200 0 0 1 1.200 1.200v1.500M980.700 205v1.500a1.200 1.200 0 0 1-1.200 1.200h-1.500M971 207.700h-1.500a1.200 1.200 0 0 1-1.200-1.200v-1.500" stroke-width="1.250"/>
<path d="M970.800 201.700c1.800-3 5.600-3 7.400 0-1.800 3-5.600 3-7.400 0z" stroke-width="0.900"/><circle cx="974.500" cy="201.700" r="0.900" fill="#333" stroke="none"/>
<!-- download -->
<path d="M1002.600 195v8.500M999.300 200.500l3.300 3.300 3.300-3.300M996.800 204.500v2a1 1 0 0 0 1 1h9.600a1 1 0 0 0 1-1v-2" stroke-width="1.250"/>
<!-- position -->
<rect x="1035" y="196.700" width="10.500" height="10.200" rx="1.200" stroke-width="1.250"/><path d="M1035 204.300l3-2.800 2 1.600 2.500-2.400 3 2.800" stroke-width="0.900"/><circle cx="1042.600" cy="199.300" r="0.500" fill="#333"/>
<path d="M1047.400 196.200v11.200" stroke="#1cc08a" stroke-width="1.300"/>
<!-- delete -->
<path d="M1067.500 197h7a1.200 1.200 0 0 1 1.200 1.200v7.500a1.200 1.200 0 0 1-1.200 1.200h-10a1.200 1.200 0 0 1-1.200-1.200v-5.200" stroke-width="1.250"/><path d="M1063.300 204.500l3.200-2.800 2.200 1.600 2.800-2.600 4 3.500" stroke-width="0.900"/><circle cx="1072.600" cy="199.300" r="0.500" fill="#333"/>
<path d="M1062.600 196.200l2.600 2.600M1065.200 196.200l-2.600 2.600" stroke-width="0.900"/>
<!-- replace -->
<path d="M1103.600 201v-3a1.200 1.200 0 0 0-1.200-1.200h-10a1.200 1.200 0 0 0-1.200 1.200v7.500a1.200 1.200 0 0 0 1.200 1.200h2" stroke-width="1.250"/><path d="M1091.300 203.500l2.500-2.200 1.700 1" stroke-width="0.900"/>
<path d="M1097 202.800h7.300M1102.800 201l1.800 1.800M1104.300 205.800h-7.300M1098.500 207.600l-1.800-1.800" stroke-width="1"/><circle cx="1100.500" cy="199.200" r="0.500" fill="#333"/>
<!-- more -->
<g fill="#222" stroke="none"><circle cx="1131.800" cy="201.800" r="0.950"/><circle cx="1136" cy="201.800" r="0.950"/><circle cx="1140.200" cy="201.800" r="0.950"/></g>
<!-- pin -->
<path d="M1162.300 189.300l3 3-1 .4-1.300 1.300-.3 2-3.700-3.700 2-.3 1.300-1.300zM1160.800 194.200l-2.300 2.300" stroke="#9a9a9a" stroke-width="0.700"/>
<path d="M1161.500 220.500v3h-3M1163.300 226.500v-2h2" stroke="#aaa" stroke-width="0.700"/>
</svg>
<div class="tl" style="left:907.200px">图生图</div>
<div class="tl" style="left:936px">OCR</div>
<div class="tl" style="left:974.500px">预览</div>
<div class="tl" style="left:1002.800px">下载</div>
<div class="tl" style="left:1041px">位置</div>
<div class="tl" style="left:1069px">删除</div>
<div class="tl" style="left:1097.500px">替换</div>
<div class="tl" style="left:1136px">更多</div>
<!-- scrollbars & robot -->
<div class="abs" style="left:1281px;top:265px;width:5.500px;height:334px;border-radius:3px;background:#cdcdcf"></div>
<div class="abs" style="left:394px;top:779.500px;width:720px;height:6.500px;border-radius:3px;background:#cfcfd1"></div>
<div class="abs" style="left:37.100px;top:723.900px;width:22.200px;height:22px;border-radius:50%;background:#17a67d"></div>
<div class="abs" style="left:41.800px;top:729.800px;width:13.100px;height:11.100px;border-radius:5.500px;background:#fff"></div>
<div class="abs" style="left:44px;top:733px;width:8.400px;height:4.400px;border-radius:2.200px;background:#14241f"></div>
<div class="abs" style="left:45.600px;top:734.500px;width:1.600px;height:1.600px;border-radius:50%;background:#fff"></div>
<div class="abs" style="left:49.200px;top:734.500px;width:1.600px;height:1.600px;border-radius:50%;background:#fff"></div>
<svg style="left:900px;top:538px" width="16" height="20" viewBox="900 538 16 20"><path d="M903.800 541.200V553.500l2.900-2.400 2 4.400 2-.9-2-4.300 3.800-.3z" fill="#fff" stroke="#555" stroke-width="0.900" stroke-linejoin="round"/></svg>
<!--/CANVAS-->
<!--PANEL-->
<div class="abs" style="left:1289px;top:162.500px;width:211px;height:1px;background:#e4e4e8"></div>
<div class="abs" style="left:1330.500px;top:131.500px;width:42px;height:31px;background:#d6eee7;border-bottom:2.800px solid #17a373"></div>
<svg class="ic" style="left:1289px;top:131px" width="211" height="32" viewBox="1289 131 211 32" stroke="#222">
<rect x="1301.800" y="139.500" width="14.800" height="14.800" rx="4" stroke-width="1.500"/><rect x="1305.700" y="143.700" width="7" height="6.300" rx="1.600" stroke-width="1.400"/>
<path d="M1352.600 140c.8 4 2.300 5.600 6.300 6.600-4 1-5.500 2.600-6.300 6.600-.8-4-2.300-5.600-6.300-6.600 4-1 5.500-2.600 6.300-6.600z" stroke="#17a373" stroke-width="1.400"/>
<path d="M1345.500 138v3M1344 139.500h3M1358.500 151.500v3M1357 153h3" stroke="#17a373" stroke-width="1"/>
<path d="M1393.400 155c-3.800-3.200-6.600-5.600-6.600-9a6.600 6.600 0 0 1 13.200 0c0 3.400-2.800 5.800-6.600 9z" stroke-width="1.400"/><path d="M1390.800 146.800a2.700 2.700 0 0 0 5.200 0" stroke-width="1.200"/><path d="M1391.300 143.800v.4M1395.500 143.800v.4" stroke-width="1.300"/>
<path d="M1432.330 142.230A3.500 3.500 0 1 1 1439.270 142.230A3.500 3.500 0 1 1 1441.410 148.820A3.500 3.500 0 1 1 1435.800 152.900A3.500 3.500 0 1 1 1430.190 148.820A3.500 3.500 0 1 1 1432.330 142.230z" stroke-width="1.400"/><circle cx="1435.800" cy="147" r="2" stroke-width="1.300"/>
<path d="M1478.500 139.800a7 7 0 1 0 0 14" stroke="#888" stroke-width="1.300"/><path d="M1478.500 139.800a7 7 0 0 1 0 14" stroke="#888" stroke-width="1.300" stroke-dasharray="1.400 2.200"/><path d="M1478.300 143v4l2.700 1.700" stroke="#888" stroke-width="1.200"/>
</svg>
<div class="pl" style="left:1295px;top:171.500px;font-size:10.150px;line-height:14px;font-weight:bold;color:#1a1a1a">图片设置</div>
<div class="pl" style="left:1295px;top:201.500px;color:#555;font-size:9.200px">宽度</div>
<div class="pl" style="left:1295px;top:233px;color:#555;font-size:9.200px">高度</div>
<div class="inp" style="top:198.500px">132</div>
<div class="inp" style="top:230px">302</div>
<div class="arr sp" style="left:1486.700px;top:202.500px;transform:translateX(-50%) rotate(180deg)"></div>
<div class="arr sp" style="left:1486.700px;top:210.400px"></div>
<div class="arr sp" style="left:1486.700px;top:234px;transform:translateX(-50%) rotate(180deg)"></div>
<div class="arr sp" style="left:1486.700px;top:241.900px"></div>
<div class="abs" style="left:1295px;top:261.700px;width:11px;height:11px;border-radius:2px;background:#14a06c"></div>
<svg class="ic" style="left:1295px;top:261.700px" width="11" height="11" viewBox="0 0 11 11"><path d="M2.800 5.600l2 2 3.500-4" stroke="#fff" stroke-width="1.300"/></svg>
<div class="pl" style="left:1310.700px;top:261px;color:#333">保持图片长宽比</div>
<div class="abs" style="left:1295px;top:287.500px;width:11px;height:11px;border-radius:2px;background:#fff;border:1px solid #d6d6da"></div>
<div class="pl" style="left:1310.700px;top:287px;color:#333">此尺寸应用于页面中所有图片</div>
<div class="abs" style="left:1295.500px;top:312px;width:197.500px;height:1px;background:#e6e6ea"></div>
<div class="pl" style="left:1295.500px;top:326px;color:#555;font-size:9.200px">图片位置</div>
<div class="pb" style="left:1307.200px"></div>
<div class="pb" style="left:1344.400px;border:1.900px solid #17a373"></div>
<div class="pb" style="left:1381.900px"></div>
<div class="pb" style="left:1419.400px"></div>
<div class="pb" style="left:1457.300px"></div>
<svg class="ic" style="left:1300px;top:350px" width="190" height="28" viewBox="1300 350 190 28" stroke="#2a2a2a"><rect x="1314.5" y="358.2" width="10.0" height="7.5" rx="1" stroke-width="1.300"/><path d="M1314.5 363.6l3.0 -2.2 2.2 1.3 2.0 -1.5 2.8 2.2v2.2h-10.0z" fill="#2a2a2a" stroke="none"/><circle cx="1321.5" cy="360.4" r="0.6" fill="#2a2a2a" stroke="none"/><path d="M1314 368.300h11" stroke="#1fb38a" stroke-width="1.500" stroke-linecap="butt"/><rect x="1351.2" y="359.3" width="8.6" height="8.0" rx="1" stroke-width="1.300"/><path d="M1351.2 365.1l2.6 -2.4 1.9 1.4 1.7 -1.6 2.4 2.4v2.4h-8.6z" fill="#2a2a2a" stroke="none"/><circle cx="1357.2" cy="361.7" r="0.6" fill="#2a2a2a" stroke="none"/><path d="M1362 360v7" stroke="#1fb38a" stroke-width="2.600" stroke-linecap="butt"/><path d="M1389.300 358.300h10.700" stroke="#1fb38a" stroke-width="1.500" stroke-linecap="butt"/><rect x="1389.8" y="360.8" width="9.8" height="7.2" rx="1" stroke-width="1.300"/><path d="M1389.8 366.0l2.9 -2.2 2.2 1.3 2.0 -1.4 2.7 2.2v2.2h-9.8z" fill="#2a2a2a" stroke="none"/><circle cx="1396.7" cy="363.0" r="0.6" fill="#2a2a2a" stroke="none"/><path d="M1426.800 359.700v7" stroke="#1fb38a" stroke-width="1.600" stroke-linecap="butt"/><rect x="1428.6" y="358.8" width="9.0" height="8.5" rx="1" stroke-width="1.300"/><path d="M1428.6 364.9l2.7 -2.5 2.0 1.5 1.8 -1.7 2.5 2.5v2.5h-9.0z" fill="#2a2a2a" stroke="none"/><circle cx="1434.9" cy="361.4" r="0.6" fill="#2a2a2a" stroke="none"/><rect x="1464.6" y="358.3" width="9.8" height="9.8" rx="1" stroke-width="1.300"/><path d="M1464.6 365.4l2.9 -2.9 2.2 1.8 2.0 -2.0 2.7 2.9v2.9h-9.8z" fill="#2a2a2a" stroke="none"/><circle cx="1471.5" cy="361.2" r="0.6" fill="#2a2a2a" stroke="none"/><path d="M1467 360.900h5.500" stroke="#1fb38a" stroke-width="1.400" stroke-linecap="butt"/></svg>
<div class="pl ctr" style="left:1319.400px;top:383.400px;color:#555">顶部</div>
<div class="pl ctr" style="left:1356.600px;top:383.400px;color:#555">左边</div>
<div class="pl ctr" style="left:1394.100px;top:383.400px;color:#555">底部</div>
<div class="pl ctr" style="left:1431.600px;top:383.400px;color:#555">右边</div>
<div class="pl ctr" style="left:1469.500px;top:383.400px;color:#555">沉底</div>
<div class="abs" style="left:1307.200px;top:407.500px;width:174.500px;height:24.500px;background:#fff;border:1px solid #e6e6ea;border-radius:5px;text-align:center;line-height:23px;font-size:9.600px;font-weight:bold;color:#222">替换图片</div>
<!--/PANEL-->
<!--STATUS-->
<svg class="ic" style="left:11px;top:793px" width="16" height="12" viewBox="0 0 16 12"><path d="M2 2.500v7.500M14 2.500v7.500" stroke-width="1"/><rect x="4.300" y="2.500" width="7.400" height="7.500" rx="0.800" stroke-width="1"/></svg>
<div class="abs" style="left:38px;top:789px;width:1px;height:20px;background:#d9dae6"></div>
<div class="stt" style="left:45px;color:#222">页面-1</div>
<div class="arr" style="left:111.500px;top:797.500px;border-left-width:2px;border-right-width:2px;border-top-width:2.500px;border-top-color:#555"></div>
<div class="abs" style="left:121px;top:789px;width:1px;height:20px;background:#d9dae6"></div>
<svg class="ic" style="left:137px;top:793px" width="12" height="12" viewBox="0 0 12 12"><path d="M6 1v10M1 6h10" stroke-width="0.900" stroke="#333"/></svg>
<div class="abs" style="left:164px;top:789px;width:1px;height:20px;background:#d9dae6"></div>
<div class="stt" style="left:181px;color:#1a9e6e;font-weight:bold">页面-1</div>
<div class="abs" style="left:225px;top:789px;width:1px;height:20px;background:#d9dae6"></div>
<div class="stt" style="left:1142.500px;color:#444;font-size:9.800px">[Image 153]</div>
<svg class="ic" style="left:1205px;top:791px" width="295" height="16" viewBox="1205 791 295 16" stroke-width="0.900">
<path d="M1209 795h10.500v8.500h-10.500zM1212.500 795v8.500M1216 795v8.500" stroke-width="0.900"/>
<rect x="1231" y="794" width="10" height="10.500" rx="1" stroke-width="0.900"/><rect x="1233.500" y="796.300" width="5" height="2.700" stroke-width="0.800"/><rect x="1233.500" y="800" width="5" height="2.700" stroke-width="0.800"/>
<rect x="1253" y="794" width="10.500" height="10.500" rx="1" stroke-width="0.900"/><path d="M1255.300 798v-1.700h1.700M1259.500 796.300h1.700v1.700M1261.200 800.500v1.700h-1.700M1257 802.200h-1.700v-1.700" stroke-width="0.900"/>
<path d="M1274.500 799.500h5.500" stroke-width="0.900" stroke="#555"/>
<path d="M1285 799.500h77" stroke-width="1" stroke="#cfd0da"/>
<path d="M1285 799.500h17" stroke-width="1.600" stroke="#111"/>
<circle cx="1305" cy="799.500" r="3.700" fill="#fff" stroke="#111" stroke-width="1.500"/>
<path d="M1368 799.500h6M1371 796.500v6" stroke-width="0.900" stroke="#555"/>
<path d="M1449.500 797.500v-2.500h2.500M1457 795h2.500v2.500M1459.500 801.500v2.500h-2.500M1452 804h-2.500v-2.500" stroke-width="1"/>
<rect x="1476.500" y="794.500" width="10" height="10" rx="1.500" stroke-width="1"/><path d="M1478.500 799.500h6" stroke-width="1"/>
</svg>
<div class="stt" style="left:1384px;color:#333;font-size:9.800px">100%</div>
<div class="arr" style="left:1414.500px;top:798px;border-left-width:2px;border-right-width:2px;border-top-width:2.500px;border-top-color:#666"></div>
<!--/STATUS-->
</body>
</html>
